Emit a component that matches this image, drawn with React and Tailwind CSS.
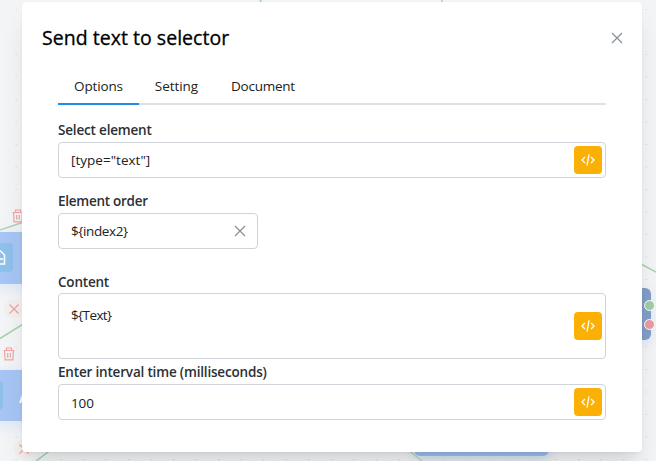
import React from 'react';

function CloseIcon({ className }) {
  return (
    <svg viewBox="0 0 12 12" className={className} fill="none" stroke="#868e96" strokeWidth="1.2">
      <path d="M1 1 11 11M11 1 1 11" />
    </svg>
  );
}

function CodeButton() {
  return (
    <button className="flex h-7 w-7 shrink-0 items-center justify-center rounded bg-[#fab005]">
      <svg viewBox="0 0 14 14" className="h-3.5 w-3.5" fill="none" stroke="#fff" strokeWidth="1.3">
        <path d="M4 4 .9 7 4 10M10 4l3.100 3-3.100 3M8 1.300 6 12.700" />
      </svg>
    </button>
  );
}

function Trash({ className }) {
  return (
    <svg viewBox="0 0 12 14" className={className} fill="none" stroke="#f4a3a3" strokeWidth="1.2">
      <path d="M.5 3.500h11M3.500 3.500V1h5v2.500M1.600 3.500l.5 9.400h7.800l.5-9.400M4.700 6v4.800M7.300 6v4.800" />
    </svg>
  );
}

function RedCross({ className }) {
  return (
    <span className={'flex h-5 w-5 items-center justify-center rounded-full bg-[#f3efef] ' + className}>
      <svg viewBox="0 0 10 10" className="h-2.5 w-2.5" fill="none" stroke="#f3a1a1" strokeWidth="1.3">
        <path d="M.5.5l9 9M9.500.5l-9 9" />
      </svg>
    </span>
  );
}

function Canvas() {
  return (
    <div className="absolute inset-0 overflow-hidden bg-[#f3f4f6]">
      <svg className="absolute inset-0" width="656" height="461">
        <defs>
          <pattern id="dots" x="15.500" y="9" width="22.500" height="22.500" patternUnits="userSpaceOnUse">
            <rect width="1.300" height="1" fill="#d5d8e4" />
          </pattern>
        </defs>
        <rect width="656" height="461" fill="url(#dots)" />
        <g fill="none" stroke="#a6d3ac" strokeWidth="1.500">
          <path d="M260 0l2 3M442 0v3M0 230l24-8M0 338.500l24-15M36 461l16-12M407 449l15 12M641 264l15 8" />
        </g>
      </svg>
      <div className="absolute -left-10 top-[232px] h-[52px] w-24 bg-[#a6c5f4] shadow-[0_4px_14px_#dbe7f6]" />
      <div className="absolute -left-4 top-[243px] h-[29px] w-[29px] rounded bg-[#8fbfeb]" />
      <svg className="absolute left-0 top-[249px]" width="6" height="17" fill="none" stroke="#fff" strokeWidth="1.500">
        <path d="M0 1.500 4.500 6v9H0M0 10h3" />
      </svg>
      <div className="absolute -left-10 top-[370px] h-[51px] w-24 bg-[#a6c5f4] shadow-[0_4px_14px_#dbe7f6]" />
      <div className="absolute -left-[26px] top-[381px] h-[29px] w-[29px] rounded bg-[#8fbfeb]" />
      <span className="absolute left-[19px] top-[387px] text-base leading-5 font-semibold text-white">A</span>
      <Trash className="absolute left-3 top-[209px] h-[14px] w-3" />
      <Trash className="absolute left-[3px] top-[347px] h-[14px] w-3" />
      <RedCross className="absolute left-1 top-[299px]" />
      <RedCross className="absolute left-[14px] top-[439px]" />
      <div className="absolute left-[600px] top-[288px] h-[52px] w-[51px] rounded-md bg-[#829dc7] shadow-[0_4px_12px_#dbe7f6]" />
      <div className="absolute left-[644px] top-[300px] h-[11px] w-[11px] rounded-full border border-white bg-[#a0cda4]" />
      <div className="absolute left-[644px] top-[319px] h-[11px] w-[11px] rounded-full border border-white bg-[#ec9b9d]" />
      <div className="absolute left-[414px] top-[404px] h-[52px] w-[135px] rounded-md bg-[#9dbff0] shadow-[0_4px_12px_#cfe0ee]" />
    </div>
  );
}

function Field({ title, titleClass, value, valueClass, boxClass = 'h-9', children }) {
  return (
    <section>
      <h2 className={'h-[22px] text-[13.500px] leading-5 font-semibold text-[#2b3035] ' + titleClass}>{title}</h2>
      <div className={'flex items-center justify-between rounded border border-[#ced4da] bg-white pl-3 pr-[3px] text-[13.500px] text-[#222] ' + boxClass}>
        <span className={valueClass}>{value}</span>
        {children}
      </div>
    </section>
  );
}

export default function App() {
  return (
    <div className="relative h-[461px] w-[656px] overflow-hidden font-['Open_Sans','Noto_Sans',sans-serif] text-sm leading-5">
      <Canvas />
      <main className="relative mt-0.5 ml-[22px] h-[450px] w-[620px] rounded bg-white shadow-[0_1px_3px_#0000000d,0_20px_25px_-5px_#0000001a,0_10px_10px_-5px_#0000000a]">
        <header className="flex h-[72px] items-center justify-between pl-5 pr-[19px]">
          <h1 className="text-[19.500px] leading-7 font-medium tracking-[0.030px] text-black [-webkit-text-stroke:0.300px_#000]">Send text to selector</h1>
          <button><CloseIcon className="h-3 w-3" /></button>
        </header>
        <div className="px-9 pt-0.5">
          <nav className="flex h-[29px] border-b-2 border-[#dee2e6] text-[13.500px] text-[#222]">
            <button className="h-[29px] w-[81px] border-b-2 border-[#228be6] pb-2 tracking-[-0.150px]">Options</button>
            <button className="h-[27px] w-[75px] pb-2 tracking-[-0.050px]">Setting</button>
            <button className="h-[27px] w-[98px] pb-2 tracking-[-0.250px]">Document</button>
          </nav>
          <div className="flex flex-col pt-[15px]">
            <Field title="Select element" titleClass="tracking-[-0.180px]" value={'[type="text"]'} valueClass="tracking-[0.020px]">
              <CodeButton />
            </Field>
            <div className="pt-[13px] pb-[22px]">
              <Field title="Element order" titleClass="tracking-[-0.260px]" value={'${index2}'} valueClass="tracking-[-0.380px]" boxClass="h-9 w-[200px]">
                <CloseIcon className="mr-2 h-3 w-3" />
              </Field>
            </div>
            <Field title="Content" titleClass="pt-px tracking-[-0.200px]" value={'${Text}'} valueClass="self-start pt-[11px] tracking-[-0.600px]" boxClass="h-[66px]">
              <CodeButton />
            </Field>
            <div className="pt-[3px]">
              <Field title="Enter interval time (milliseconds)" titleClass="tracking-[-0.180px]" value="100" valueClass="pt-0.5 tracking-[-0.150px]">
                <CodeButton />
              </Field>
            </div>
          </div>
        </div>
      </main>
    </div>
  );
}
